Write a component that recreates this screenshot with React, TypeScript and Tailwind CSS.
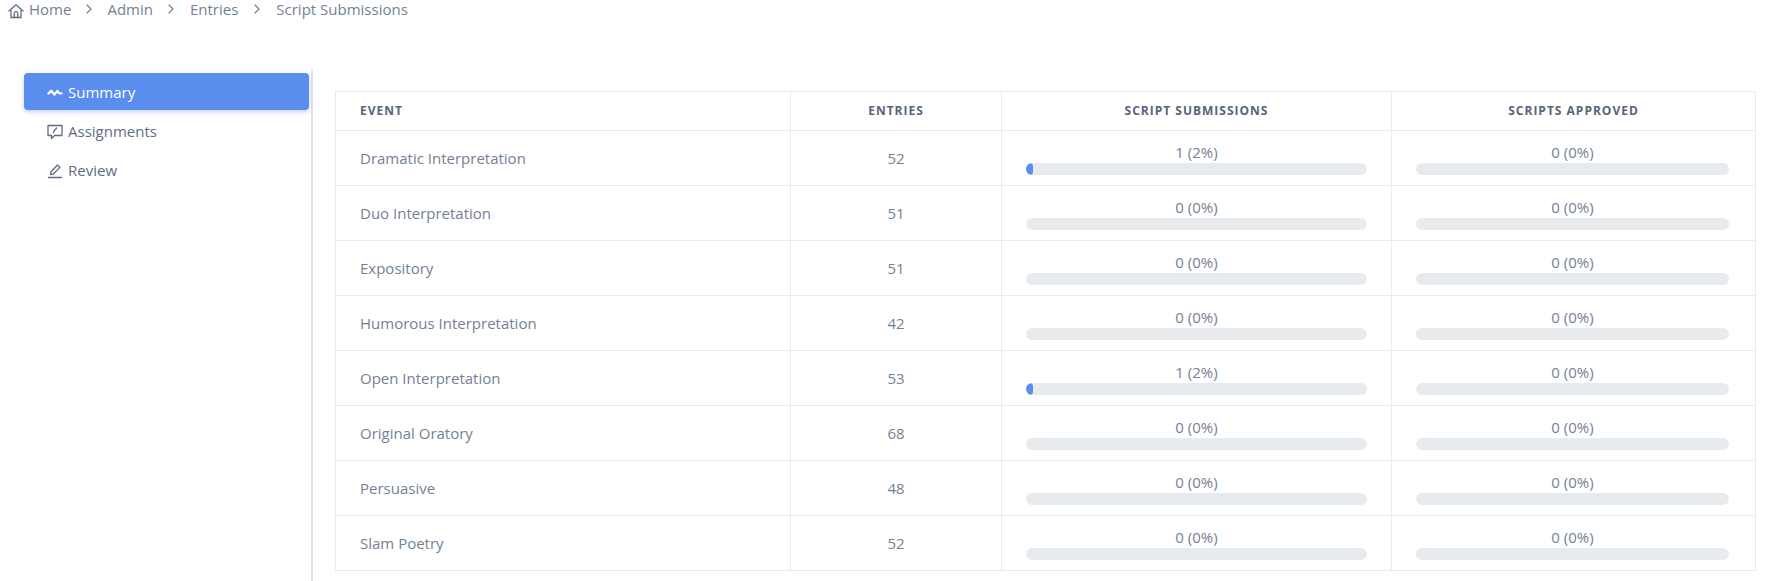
import { ChevronRight } from "lucide-react";

const rows: [string, number, string, number][] = [
  ["Dramatic Interpretation", 52, "1 (2%)", 2],
  ["Duo Interpretation", 51, "0 (0%)", 0],
  ["Expository", 51, "0 (0%)", 0],
  ["Humorous Interpretation", 42, "0 (0%)", 0],
  ["Open Interpretation", 53, "1 (2%)", 2],
  ["Original Oratory", 68, "0 (0%)", 0],
  ["Persuasive", 48, "0 (0%)", 0],
  ["Slam Poetry", 52, "0 (0%)", 0],
];

function Bar({ label, pct, wide }: { label: string; pct: number; wide?: boolean }) {
  return (
    <div className={wide ? "pl-6 pr-6 pt-[9px]" : "pl-6 pr-[26px] pt-[9px]"}>
      <div className="mt-[2px] mb-[1px] text-center text-[15px] leading-[20px] text-[#748194]">{label}</div>
      <div className="h-3 overflow-hidden rounded-full bg-[#e8ebee]">
        {pct > 0 && <div className="h-full rounded-full bg-[#5a8dee]" style={{ width: `${pct}%` }} />}
      </div>
    </div>
  );
}

export default function App() {
  return (
    <div className="h-[581px] w-[1769px] overflow-hidden bg-white font-['Open_Sans','Noto_Sans',sans-serif] text-[15px] text-[#5e6e82]">
      <nav className="flex h-[69px] items-start pl-[8px] text-[15px] leading-[18px] text-[#748194]">
        <svg className="mr-[5px] mt-[3px] h-4 w-4" viewBox="0 0 16 16" fill="none" stroke="#5e6e82" strokeWidth="1.3">
          <path d="M1 8 8 1.8 15 8" strokeLinecap="round" strokeLinejoin="round" />
          <path d="M3 6.8V14.5H13V6.8" />
          <path d="M6.2 14.5V10.5a1.8 1.8 0 0 1 3.6 0V14.5" />
        </svg>
        <span>Home</span>
        <ChevronRight className="mx-[10px] mt-[1px] h-4 w-4" strokeWidth={1.8} />
        <span>Admin</span>
        <ChevronRight className="mx-[10.5px] mt-[1px] h-4 w-4" strokeWidth={1.8} />
        <span>Entries</span>
        <ChevronRight className="mx-[11px] mt-[1px] h-4 w-4" strokeWidth={1.8} />
        <span>Script Submissions</span>
      </nav>
      <div className="flex">
        <aside className="h-[512px] w-[313px] shrink-0 border-r-2 border-[#dfe3e8] pl-[24px] pr-[2px] pt-[4px]">
          <div className="flex h-[37px] w-[285px] items-center rounded-[4px] bg-[#5a8dee] pl-[23px] pt-[2px] text-[15px] text-white shadow-[0_2px_5px_rgba(90,141,238,0.4)]">
            <svg className="mr-[5px] h-4 w-4" viewBox="0 0 16 16" fill="none" stroke="white" strokeWidth="2.3" strokeLinecap="round" strokeLinejoin="round">
              <path d="M1.5 8.5 4.2 5.8 7.4 9.6 10.4 6l2 2.4h2" />
            </svg>
            Summary
          </div>
          <div className="mt-[2px] flex h-[37px] items-center pl-[23px] pt-[2px] text-[15px] text-[#5e6e82]">
            <svg className="mr-[5px] h-4 w-4" viewBox="0 0 16 16" fill="none" stroke="#5e6e82" strokeWidth="1.3" strokeLinejoin="round">
              <path d="M1 1.5h14v10H7.5L4.5 14.5v-3H1z" />
              <path d="M6.5 8.5 7 7l2.6-3" strokeLinecap="round" />
            </svg>
            Assignments
          </div>
          <div className="mt-[2px] flex h-[37px] items-center pl-[23px] pt-[2px] text-[15px] text-[#5e6e82]">
            <svg className="mr-[5px] h-4 w-4" viewBox="0 0 16 16" fill="none" stroke="#5e6e82" strokeWidth="1.3" strokeLinejoin="round">
              <path d="M3.5 11.5 4 8.7 10.5 2l2.5 2.4-6.6 6.6z" />
              <path d="M1.5 14.5h13" strokeLinecap="round" strokeWidth="1.5" />
            </svg>
            Review
          </div>
        </aside>
        <main className="pl-[22px] pt-[22px]">
          <table className="w-[1420px] table-fixed border-collapse border border-[#e9ecef]">
            <colgroup>
              <col className="w-[455px]" />
              <col className="w-[211px]" />
              <col className="w-[390px]" />
              <col className="w-[364px]" />
            </colgroup>
            <thead>
              <tr className="h-[39px] text-[12px] font-bold uppercase tracking-[1px] text-[#56657a]">
                <th className="border border-[#e9ecef] pl-6 text-left">Event</th>
                <th className="border border-[#e9ecef] text-center">Entries</th>
                <th className="border border-[#e9ecef] text-center">Script Submissions</th>
                <th className="border border-[#e9ecef] text-center">Scripts Approved</th>
              </tr>
            </thead>
            <tbody>
              {rows.map(([name, entries, label, pct]) => (
                <tr key={name} className="h-[55px] text-[15px] text-[#748194]">
                  <td className="border border-[#e9ecef] pl-6">{name}</td>
                  <td className="border border-[#e9ecef] text-center">{entries}</td>
                  <td className="border border-[#e9ecef] p-0 align-top"><Bar label={label} pct={pct} wide /></td>
                  <td className="border border-[#e9ecef] p-0 align-top"><Bar label="0 (0%)" pct={0} /></td>
                </tr>
              ))}
            </tbody>
          </table>
        </main>
      </div>
    </div>
  );
}
